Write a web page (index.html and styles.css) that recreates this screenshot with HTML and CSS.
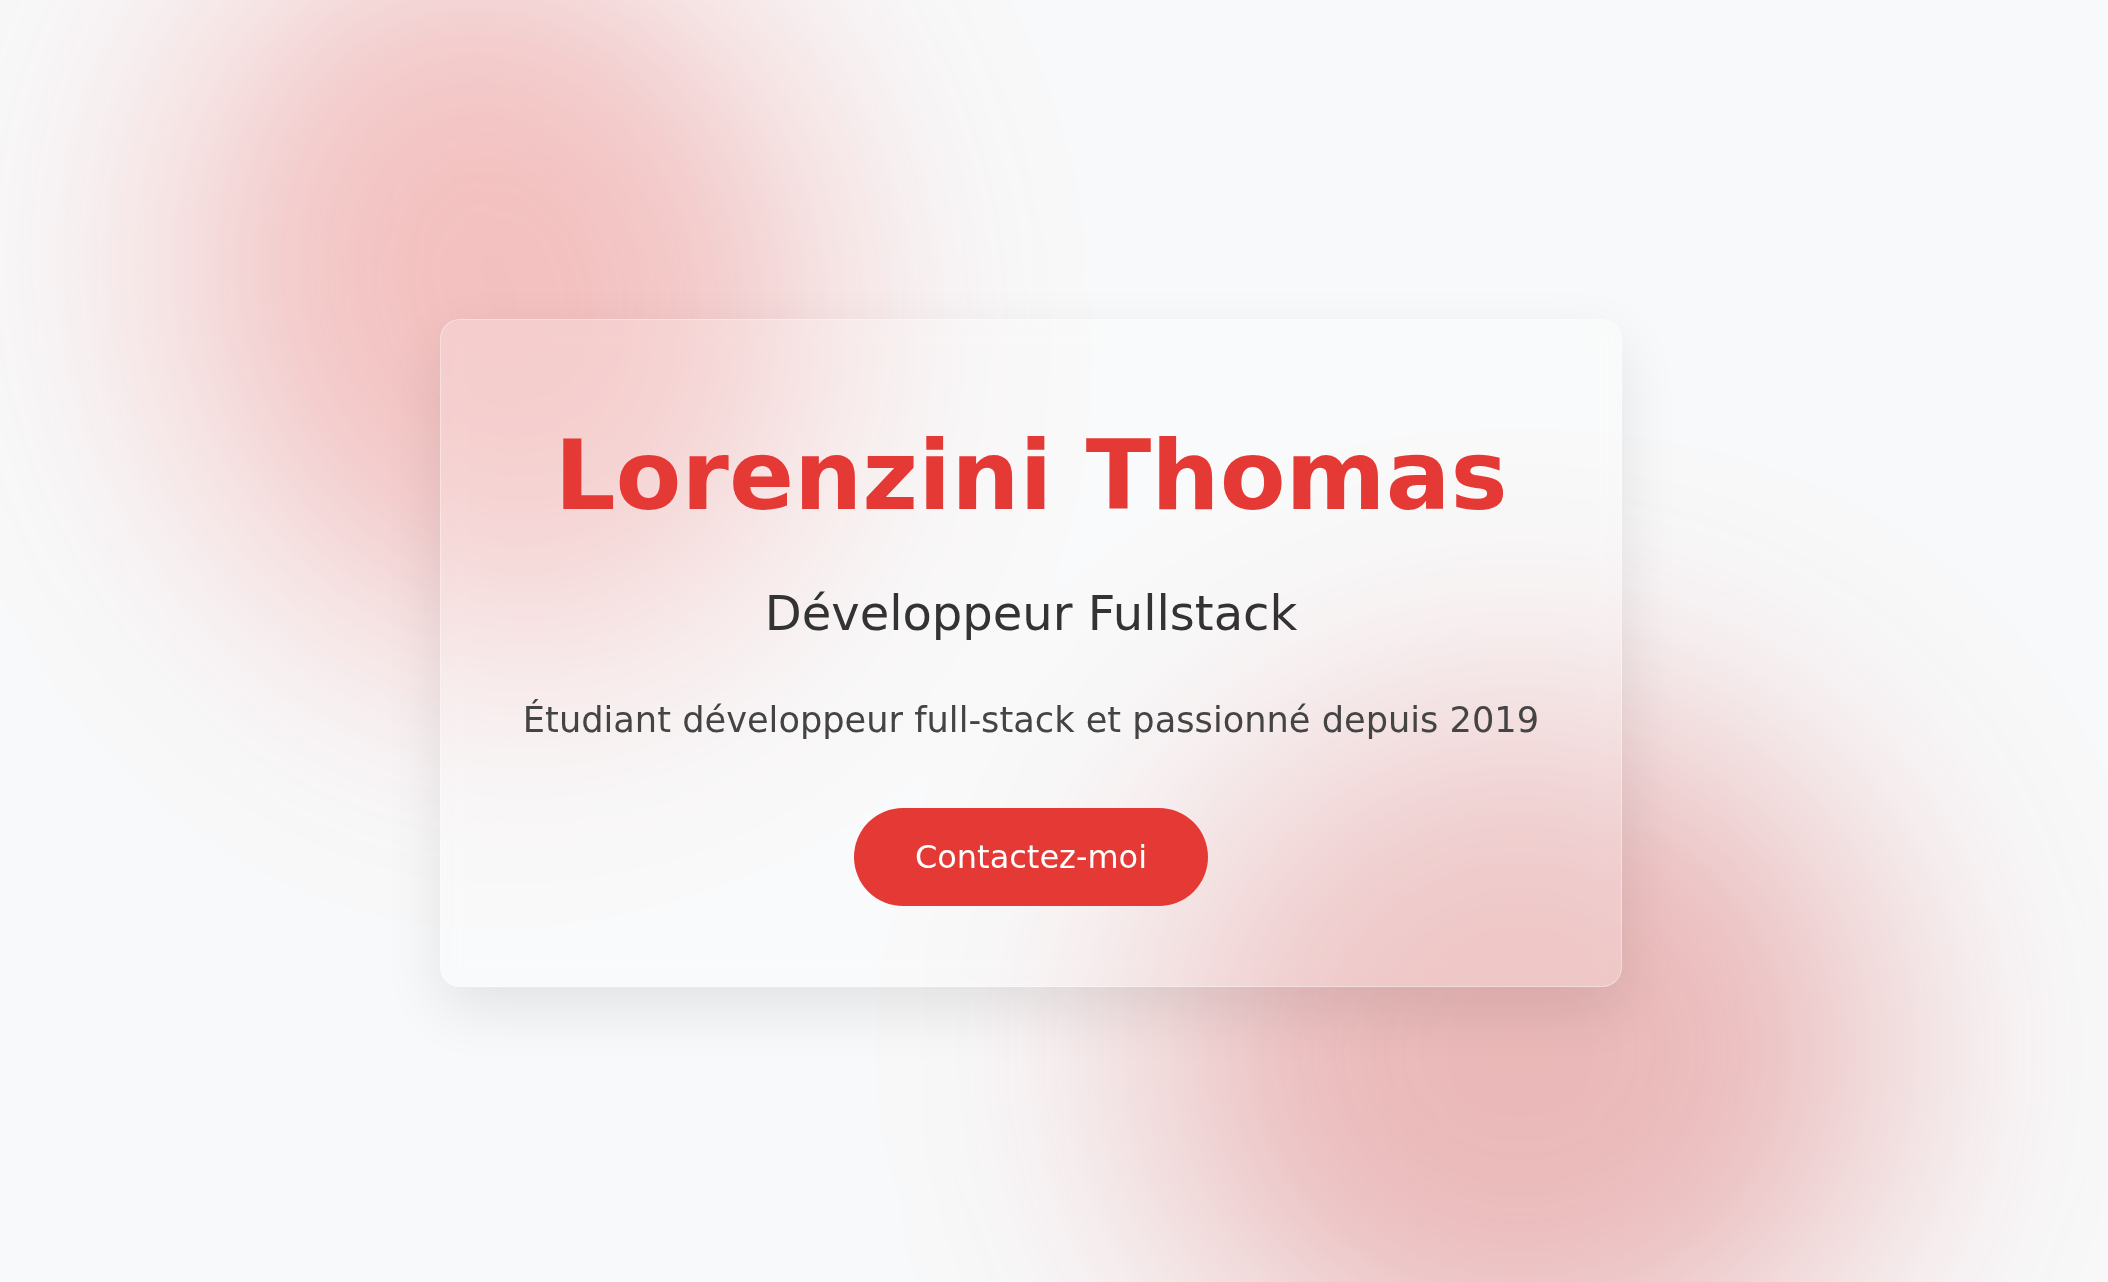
FILE: index.html
```html
<!DOCTYPE html>
<html lang="fr">
<head>
<meta charset="utf-8">
<title>Lorenzini Thomas</title>
<link rel="stylesheet" href="styles.css">
</head>
<body>
<main class="hero">
  <div class="blob blob-a"></div>
  <div class="blob blob-b"></div>
  <section class="card">
    <h1 class="name">Lorenzini Thomas</h1>
    <h2 class="role">Développeur Fullstack</h2>
    <p class="intro">Étudiant développeur full-stack et passionné depuis 2019</p>
    <a class="cta" href="#contact">Contactez-moi</a>
  </section>
</main>
</body>
</html>
```

FILE: styles.css
```css
* {
  box-sizing: border-box;
}

html, body {
  margin: 0;
  padding: 0;
}

body {
  background: #f8f9fa;
  font-family: "DejaVu Sans", "Liberation Sans", sans-serif;
  color: #333;
  overflow: hidden;
}

.hero {
  position: relative;
  min-height: 100vh;
  display: flex;
  align-items: center;
  justify-content: center;
  padding: 24px 46px 0 0;
  overflow: hidden;
}

.blob {
  position: absolute;
  border-radius: 50%;
  filter: blur(130px);
  z-index: 0;
}

.blob-a {
  width: 620px;
  height: 740px;
  left: 190px;
  top: -80px;
  background: rgba(229, 57, 53, 0.3);
  transform: rotate(-18deg);
}

.blob-b {
  width: 740px;
  height: 700px;
  left: 1150px;
  top: 700px;
  background: rgba(205, 42, 42, 0.32);
}

.card {
  position: relative;
  z-index: 1;
  width: 1182px;
  padding: 100px 80px 80px;
  text-align: center;
  background: rgba(255, 255, 255, 0.2);
  border: 1px solid rgba(255, 255, 255, 0.35);
  border-radius: 20px;
  backdrop-filter: blur(12px);
  box-shadow: 0 22px 60px rgba(0, 0, 0, 0.09);
}

.name {
  margin: 0 0 53px;
  font-size: 96px;
  font-weight: 700;
  color: #e53935;
  line-height: normal;
}

.role {
  margin: 0 0 58px;
  font-size: 48px;
  font-weight: 400;
  color: #333;
  line-height: normal;
}

.intro {
  margin: 0 0 68px;
  font-size: 35.2px;
  color: #444;
  line-height: normal;
}

.cta {
  display: inline-block;
  padding: 30px 61px;
  font-size: 32px;
  line-height: normal;
  color: #fff;
  background: #e53935;
  border-radius: 50px;
  text-decoration: none;
}
```
